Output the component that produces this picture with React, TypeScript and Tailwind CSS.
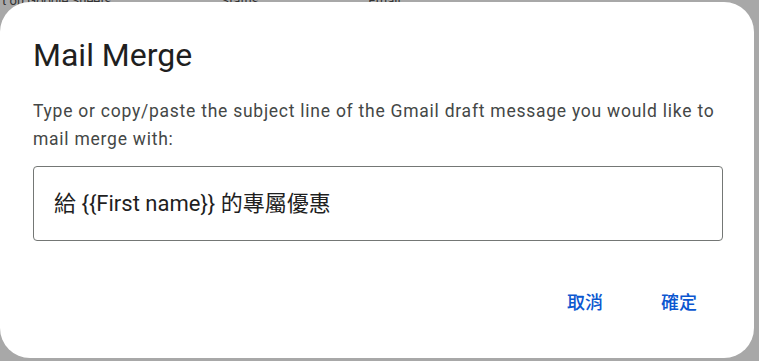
export default function App() {
  return (
    <div className="relative w-[759px] h-[361px] overflow-hidden bg-[#a8a8a8]" style={{ fontFamily: "Roboto, 'Noto Sans CJK TC', sans-serif" }}>
      {/* page behind the overlay, mostly hidden */}
      <div className="absolute left-[2px] top-[-9px] flex gap-[110px] text-[13px] text-[#333] whitespace-nowrap">
        <span>t on Google Sheets</span>
        <span>Status</span>
        <span>Email</span>
      </div>

      {/* Dialog */}
      <div className="relative mt-[2px] w-[754px] h-[356px] bg-white rounded-[30px] pl-[33px] pr-[31px] flex flex-col">
        <h1 className="pt-[33px] text-[32px] leading-[40px] text-[#1f1f1f]">Mail Merge</h1>
        <p className="mt-[22px] text-[17.5px] leading-[28px] text-[#444746] tracking-[0.75px]">
          Type or copy/paste the subject line of the Gmail draft message you would like to mail merge with:
        </p>
        <div className="mt-[13px] h-[75px] border border-[#747775] rounded-[4px] flex items-center pl-[20px]">
          <span className="text-[22px] text-[#1f1f1f]">給 {"{{First name}}"} 的專屬優惠</span>
        </div>
        <div className="mt-[43px] flex justify-end gap-[26px] pr-[2px]">
          <button className="px-[8px] h-[36px] text-[18px] font-medium text-[#0b57d0]">取消</button>
          <button className="px-[24px] h-[36px] text-[18px] font-medium text-[#0b57d0]">確定</button>
        </div>
      </div>
    </div>
  );
}
